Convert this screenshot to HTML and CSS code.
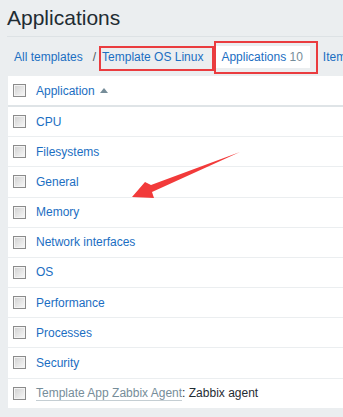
FILE: index.html
```html
<!DOCTYPE html>
<html lang="en">
<head>
    <meta charset="UTF-8">
    <meta name="viewport" content="width=device-width, initial-scale=1.0">
    <title>Applications</title>
    <link rel="stylesheet" href="styles.css">
</head>
<body>
    <header class="page-header">
        <h1>Applications</h1>
    </header>

    <nav class="breadcrumbs">
        <a href="#" class="crumb">All templates</a>
        <span class="crumb-sep">/</span>
        <a href="#" class="crumb">Template OS Linux</a>
        <span class="tab">Applications <span class="tab-count">10</span></span>
        <a href="#" class="crumb crumb-next">Items</a>
    </nav>

    <main class="list">
        <div class="list-head">
            <span class="checkbox"></span>
            <a href="#" class="sort-link">Application</a>
            <span class="sort-arrow"></span>
        </div>
        <div class="list-row"><span class="checkbox"></span><a href="#">CPU</a></div>
        <div class="list-row"><span class="checkbox"></span><a href="#">Filesystems</a></div>
        <div class="list-row"><span class="checkbox"></span><a href="#">General</a></div>
        <div class="list-row"><span class="checkbox"></span><a href="#">Memory</a></div>
        <div class="list-row"><span class="checkbox"></span><a href="#">Network interfaces</a></div>
        <div class="list-row"><span class="checkbox"></span><a href="#">OS</a></div>
        <div class="list-row"><span class="checkbox"></span><a href="#">Performance</a></div>
        <div class="list-row"><span class="checkbox"></span><a href="#">Processes</a></div>
        <div class="list-row"><span class="checkbox"></span><a href="#">Security</a></div>
        <div class="list-row">
            <span class="checkbox"></span>
            <a href="#" class="parent-link">Template App Zabbix Agent</a><span class="plain">: Zabbix agent</span>
        </div>
    </main>

    <!-- annotation marks drawn over the screenshot -->
    <div class="mark mark-template"></div>
    <div class="mark mark-tab"></div>
    <svg class="pointer" width="343" height="417" viewBox="0 0 343 417">
        <polygon points="240,152 151,185 145,182 132,197 154,198 152,192" fill="#f23a3a"/>
    </svg>
</body>
</html>
```

FILE: styles.css
```css
body {
    margin: 0;
    padding: 0;
    background-color: #ebeef0;
    font-family: Arial, "Liberation Sans", sans-serif;
    font-size: 12px;
    color: #1f2c33;
    overflow: hidden;
}

a {
    color: #1b6ec2;
    text-decoration: none;
}

.page-header {
    margin-left: 7px;
    padding: 6px 0 6px 0;
    border-bottom: 1px solid #dde2e5;
}

.page-header h1 {
    margin: 0;
    font-size: 21px;
    font-weight: normal;
    line-height: 24px;
    color: #1f2c33;
}

.breadcrumbs {
    display: flex;
    align-items: center;
    height: 39px;
    padding-left: 14px;
    white-space: nowrap;
    line-height: 14px;
}

.crumb-sep {
    margin: 0 6px 0 10px;
    color: #4f5a61;
}

.tab {
    margin-left: 11px;
    padding: 4px 7px;
    background-color: #fff;
    color: #1b6ec2;
}

.tab-count {
    color: #768d99;
}

.crumb-next {
    margin-left: 13px;
}

.list {
    margin-left: 8px;
    background-color: #fff;
}

.list-head {
    display: flex;
    align-items: center;
    height: 29px;
    padding-left: 5px;
    border-bottom: 2px solid #dfe4e7;
}

.list-row {
    display: flex;
    align-items: center;
    height: 29.18px;
    padding-left: 5px;
    border-bottom: 1px solid #ebeef0;
    white-space: nowrap;
}

.checkbox {
    box-sizing: border-box;
    width: 13px;
    height: 13px;
    margin-right: 10px;
    border: 1px solid #8b8b8b;
    box-shadow: inset 0 0 0 1px #f3f3f3;
    background: linear-gradient(135deg, #d0d0d0, #f8f8f8);
    flex-shrink: 0;
}

.sort-arrow {
    width: 0;
    height: 0;
    margin-left: 5px;
    border-left: 4px solid transparent;
    border-right: 4px solid transparent;
    border-bottom: 5px solid #768d99;
}

.parent-link {
    color: #768d99;
    border-bottom: 1px solid #c5ced3;
}

.plain {
    color: #1f2c33;
}

.mark {
    position: absolute;
    box-sizing: border-box;
    border: 2px solid #ea3c3f;
}

.mark-template {
    left: 99px;
    top: 46px;
    width: 115px;
    height: 25px;
}

.mark-tab {
    left: 214px;
    top: 41px;
    width: 104px;
    height: 33px;
}

.pointer {
    position: absolute;
    left: 0;
    top: 0;
    pointer-events: none;
}
```
